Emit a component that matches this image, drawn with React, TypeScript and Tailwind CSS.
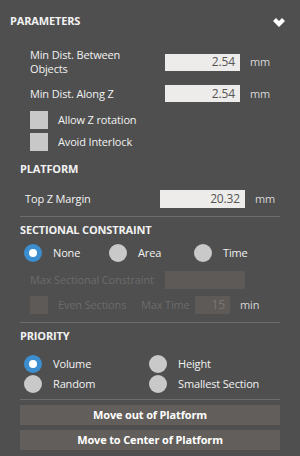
import React from "react";

const font = { fontFamily: '"Open Sans", "Liberation Sans", sans-serif' };

function Field({ value, disabled, w = "w-[75px]", h = "h-[17px]" }: { value: string; disabled?: boolean; w?: string; h?: string }) {
  return (
    <div
      className={`${w} ${h} shrink-0 flex items-center justify-end pr-[5px] text-[12px] ${
        disabled ? "bg-[#5e5a57] text-[#7a7673]" : "bg-[#eeecea] text-[#555]"
      }`}
    >
      {value}
    </div>
  );
}

function Box({ disabled }: { disabled?: boolean }) {
  return <div className={`w-[18px] h-[18px] shrink-0 ${disabled ? "bg-[#5e5a57]" : "bg-[#c8c8c8]"}`} />;
}

function Radio({ label, on, w }: { label: string; on?: boolean; w: string }) {
  return (
    <div className={`${w} flex items-center h-[18px]`}>
      {on ? (
        <div className="w-[18px] h-[18px] rounded-full bg-[#3b8fd0] flex items-center justify-center shrink-0">
          <div className="w-[8px] h-[8px] rounded-full bg-white" />
        </div>
      ) : (
        <div className="w-[18px] h-[18px] rounded-full bg-[#c9c9c9] shrink-0" />
      )}
      <span className="ml-[11px] whitespace-nowrap">{label}</span>
    </div>
  );
}

function Heading({ children, mt }: { children: React.ReactNode; mt: string }) {
  return <div className={`${mt} h-[14px] leading-[14px] pl-[20px] font-bold`}>{children}</div>;
}

function Divider({ mt }: { mt: string }) {
  return <div className={`${mt} mx-[20px] h-px bg-[#6c6c6c]`} />;
}

export default function App() {
  return (
    <div style={font} className="w-[300px] h-[456px] bg-[#4f4f4f] text-[#f2f2f2] text-[11px] leading-[14px] tracking-[-0.15px] overflow-hidden">
      {/* Header */}
      <div className="h-[42px] flex items-center justify-between pl-[10px] pr-[15px]">
        <span className="font-bold">PARAMETERS</span>
        <svg width="12" height="9" viewBox="0 0 12 9" className="mt-[3px]">
          <path d="M0 3 L3 0 L6 3 L9 0 L12 3 L6 9 Z" fill="#fff" />
        </svg>
      </div>

      {/* Parameters */}
      <div className="pl-[30px]">
        <div className="mt-[6px] flex items-center">
          <div className="w-[135px]">
            Min Dist. Between
            <br />
            Objects
          </div>
          <Field value="2.54" />
          <span className="ml-[10px] text-[#d8d8d8]">mm</span>
        </div>
        <div className="mt-[9px] flex items-center h-[17px]">
          <div className="w-[135px]">Min Dist. Along Z</div>
          <Field value="2.54" />
          <span className="ml-[10px] text-[#d8d8d8]">mm</span>
        </div>
        <div className="mt-[9px] flex items-center">
          <Box />
          <span className="ml-[10px]">Allow Z rotation</span>
        </div>
        <div className="mt-[4px] flex items-center">
          <Box />
          <span className="ml-[10px]">Avoid Interlock</span>
        </div>
      </div>

      {/* Platform */}
      <Heading mt="mt-[11px]">PLATFORM</Heading>
      <div className="mt-[14px] pl-[25px] flex items-center h-[18px]">
        <div className="w-[135px]">Top Z Margin</div>
        <Field value="20.32" w="w-[85px]" h="h-[18px]" />
        <span className="ml-[10px] text-[#d8d8d8]">mm</span>
      </div>
      <Divider mt="mt-[8px]" />

      {/* Sectional constraint */}
      <Heading mt="mt-[6px]">SECTIONAL CONSTRAINT</Heading>
      <div className="mt-[7px] pl-[24px] flex">
        <Radio label="None" on w="w-[85px]" />
        <Radio label="Area" w="w-[85px]" />
        <Radio label="Time" w="w-[85px]" />
      </div>
      <div className="mt-[9px] pl-[30px] flex items-center h-[18px] text-[#6b6b6b]">
        <div className="w-[135px] whitespace-nowrap">Max Sectional Constraint</div>
        <Field value="" disabled w="w-[80px]" h="h-[18px]" />
      </div>
      <div className="mt-[7px] pl-[30px] flex items-center h-[18px] text-[#6b6b6b] whitespace-nowrap">
        <Box disabled />
        <span className="ml-[10px] w-[83px]">Even Sections</span>
        <span className="w-[54px]">Max Time</span>
        <Field value="15" disabled w="w-[35px]" h="h-[18px]" />
        <span className="ml-[10px] text-[#d8d8d8]">min</span>
      </div>
      <Divider mt="mt-[8px]" />

      {/* Priority */}
      <Heading mt="mt-[6px]">PRIORITY</Heading>
      <div className="mt-[12px] pl-[24px] flex">
        <Radio label="Volume" on w="w-[125px]" />
        <Radio label="Height" w="w-[125px]" />
      </div>
      <div className="mt-[2px] pl-[24px] flex">
        <Radio label="Random" w="w-[125px]" />
        <Radio label="Smallest Section" w="w-[125px]" />
      </div>
      <Divider mt="mt-[6px]" />

      {/* Buttons */}
      <div className="mx-[20px] mt-[5px] flex flex-col gap-[5px]">
        <button className="h-[20px] bg-[#625e5b] font-bold text-white">Move out of Platform</button>
        <button className="h-[20px] bg-[#625e5b] font-bold text-white">Move to Center of Platform</button>
      </div>
    </div>
  );
}
